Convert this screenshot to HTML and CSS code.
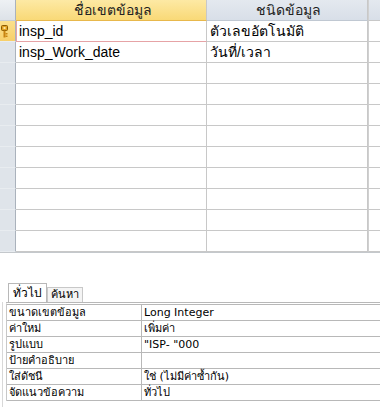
FILE: index.html
```html
<!DOCTYPE html>
<html lang="th">
<head>
    <meta charset="UTF-8">
    <title>ออกแบบตาราง</title>
    <link rel="stylesheet" href="styles.css">
</head>
<body>
    <!-- ตารางเขตข้อมูล -->
    <div class="grid">
        <div class="row head-row">
            <div class="selector corner"></div>
            <div class="cell head current-col">ชื่อเขตข้อมูล</div>
            <div class="cell head type-head">ชนิดข้อมูล</div>
            <div class="cell edge"></div>
        </div>
        <div class="row current">
            <div class="selector key">
                <svg width="7" height="13" viewBox="0 0 7 13">
                    <rect x="0.5" y="0.5" width="6" height="5" rx="1" fill="#e0a020" stroke="#8a5a00"/>
                    <rect x="2.5" y="2" width="2" height="2" fill="#fbe7a0"/>
                    <rect x="2.5" y="5.5" width="2" height="7" fill="#c88410"/>
                    <rect x="4.5" y="8" width="2" height="1.5" fill="#c88410"/>
                    <rect x="4.5" y="10.5" width="2" height="1.5" fill="#c88410"/>
                </svg>
            </div>
            <div class="cell field active">insp_id</div>
            <div class="cell type">ตัวเลขอัตโนมัติ</div>
            <div class="cell edge"></div>
        </div>
        <div class="row">
            <div class="selector"></div>
            <div class="cell field">insp_Work_date</div>
            <div class="cell type">วันที่/เวลา</div>
            <div class="cell edge"></div>
        </div>
        <div class="row"><div class="selector"></div><div class="cell"></div><div class="cell"></div><div class="cell edge"></div></div>
        <div class="row"><div class="selector"></div><div class="cell"></div><div class="cell"></div><div class="cell edge"></div></div>
        <div class="row"><div class="selector"></div><div class="cell"></div><div class="cell"></div><div class="cell edge"></div></div>
        <div class="row"><div class="selector"></div><div class="cell"></div><div class="cell"></div><div class="cell edge"></div></div>
        <div class="row"><div class="selector"></div><div class="cell"></div><div class="cell"></div><div class="cell edge"></div></div>
        <div class="row"><div class="selector"></div><div class="cell"></div><div class="cell"></div><div class="cell edge"></div></div>
        <div class="row"><div class="selector"></div><div class="cell"></div><div class="cell"></div><div class="cell edge"></div></div>
        <div class="row"><div class="selector"></div><div class="cell"></div><div class="cell"></div><div class="cell edge"></div></div>
        <div class="row"><div class="selector"></div><div class="cell"></div><div class="cell"></div><div class="cell edge"></div></div>
    </div>

    <!-- คุณสมบัติเขตข้อมูล -->
    <div class="props">
        <div class="tabs">
            <span class="tab active">ทั่วไป</span>
            <span class="tab">ค้นหา</span>
        </div>
        <div class="frame">
            <div class="sheet">
                <div class="prop"><span class="label">ขนาดเขตข้อมูล</span><span class="value">Long Integer</span></div>
                <div class="prop"><span class="label">ค่าใหม่</span><span class="value">เพิ่มค่า</span></div>
                <div class="prop"><span class="label">รูปแบบ</span><span class="value">"ISP- "000</span></div>
                <div class="prop"><span class="label">ป้ายคำอธิบาย</span><span class="value"></span></div>
                <div class="prop"><span class="label">ใส่ดัชนี</span><span class="value">ใช่ (ไม่มีค่าซ้ำกัน)</span></div>
                <div class="prop"><span class="label">จัดแนวข้อความ</span><span class="value">ทั่วไป</span></div>
            </div>
        </div>
    </div>
</body>
</html>
```

FILE: styles.css
```css
body {
    margin: 0;
    background-color: white;
    color: black;
    font-family: "Liberation Sans", "Noto Sans", sans-serif;
    width: 380px;
    height: 407px;
    overflow: hidden;
}
.grid {
    display: flex;
    flex-direction: column;
    border-bottom: 1px solid #c4c8cc;
}
.row {
    display: grid;
    grid-template-columns: 16px 191px 161px 12px;
    height: 21px;
}
.selector {
    background-color: #dfe4ea;
    border-right: 1px solid #aab2bc;
    border-bottom: 1px solid #e8ecf0;
}
.corner {
    background: linear-gradient(#eef1f4, #dde2e8);
    border-bottom: 1px solid #c5ccd4;
}
.key {
    background: linear-gradient(#fbe08c, #f7cf6a);
    display: flex;
    align-items: center;
    padding-left: 1px;
}
.cell {
    border-right: 1px solid #c8c8c8;
    border-bottom: 1px solid #c8c8c8;
    font-size: 14px;
    line-height: 20px;
    padding-left: 3px;
    white-space: nowrap;
    overflow: hidden;
}
.head {
    background: linear-gradient(#e4e9ef, #d8dfe8);
    border-bottom: 1px solid #c0c8d2;
    text-align: center;
    color: #222;
}
.current-col {
    background: linear-gradient(#fde9a4, #f9d977);
    border-bottom: 1px solid #e8b84c;
}
.type-head {
    text-align: left;
    padding-left: 49px;
}
.edge {
    border-left: 1px solid #d0d0d0;
    border-right: none;
    padding-left: 0;
}
.head-row .edge {
    background: linear-gradient(#e4e9ef, #d8dfe8);
}
.field.active {
    border-bottom: 1px solid #e6a3a6;
    border-left: 1px solid #e6a3a6;
    padding-left: 2px;
}
.props {
    padding-top: 30px;
    font-family: "DejaVu Sans", sans-serif;
    font-size: 11px;
}
.tabs {
    display: flex;
    align-items: flex-end;
    height: 19px;
    padding-left: 8px;
}
.tab {
    border: 1px solid #c8c8c8;
    border-bottom: none;
    padding: 0 3px;
    height: 14px;
    line-height: 14px;
    font-size: 11px;
    background-color: #f4f4f4;
}
.tab.active {
    height: 18px;
    line-height: 18px;
    padding: 0 4px;
    background-color: white;
    border-color: #b8b8b8;
    font-size: 12px;
}
.frame {
    border-left: 1px solid #d8d8d8;
    margin-left: 2px;
    padding-left: 3px;
    height: 110px;
}
.sheet {
    border-top: 3px double #b8b8b8;
    border-left: 1px solid #c8c8c8;
    display: flex;
    flex-direction: column;
}
.prop {
    display: grid;
    grid-template-columns: 135px 1fr;
    height: 15px;
    border-bottom: 1px solid #b8b8b8;
}
.label {
    padding-left: 2px;
    line-height: 15px;
    border-right: 1px solid #b8b8b8;
    white-space: nowrap;
}
.value {
    padding-left: 2px;
    line-height: 15px;
    white-space: nowrap;
}
```
